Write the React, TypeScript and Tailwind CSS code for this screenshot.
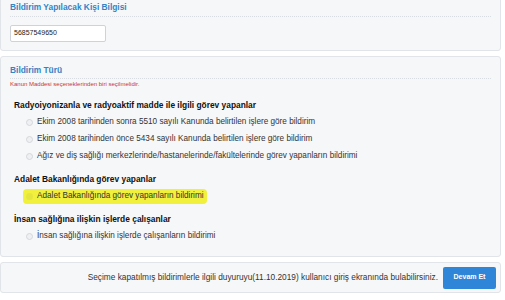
const sections = [
  {
    title: "Radyoiyonizanla ve radyoaktif madde ile ilgili görev yapanlar",
    options: [
      "Ekim 2008 tarihinden sonra 5510 sayılı Kanunda belirtilen işlere göre bildirim",
      "Ekim 2008 tarihinden önce 5434 sayılı Kanunda belirtilen işlere göre bildirim",
      "Ağız ve diş sağlığı merkezlerinde/hastanelerinde/fakültelerinde görev yapanların bildirimi",
    ],
  },
  {
    title: "Adalet Bakanlığında görev yapanlar",
    options: ["Adalet Bakanlığında görev yapanların bildirimi"],
    marked: true,
  },
  {
    title: "İnsan sağlığına ilişkin işlerde çalışanlar",
    options: ["İnsan sağlığına ilişkin işlerde çalışanların bildirimi"],
  },
];

function Radio() {
  return <span className="inline-block h-[7px] w-[7px] shrink-0 rounded-full border border-[#d4d7db] bg-[#eef0f2]" />;
}

export default function App() {
  return (
    <div className="h-[300px] w-[505px] overflow-hidden bg-white font-['Liberation_Sans',Arial,sans-serif] text-[#222]">
      <div className="mt-[-6px] w-[501px] rounded-[3px] border border-[#e1e4e8] bg-[#f6f7f9] px-[9px] pb-[8px] pt-[6px]">
        <div className="text-[8.4px] font-bold leading-[13px] text-[#3583c4]">Bildirim Yapılacak Kişi Bilgisi</div>
        <div className="mt-[2px] border-b border-dotted border-[#d9dde2]" />
        <div className="mt-[8px] flex h-[17px] w-[96px] items-center rounded-[2px] border border-[#cfd3d8] bg-white px-[3px] text-[7px]">
          56857549650
        </div>
      </div>

      <div className="mt-[5px] w-[501px] rounded-[3px] border border-[#e1e4e8] bg-[#f6f7f9] px-[9px] pb-[11px] pt-[7px]">
        <div className="text-[8.4px] font-bold leading-[13px] text-[#3583c4]">Bildirim Türü</div>
        <div className="mt-[1px] border-b border-dotted border-[#d9dde2]" />
        <div className="mt-[1px] text-[6px] leading-[8px] text-[#c8363a]">Kanun Maddesi seçeneklerinden biri seçilmelidir.</div>

        <div className="mt-[10px] flex flex-col pl-[4px]">
          {sections.map((s, i) => (
            <div key={i} className={i === 0 ? "" : "mt-[7px]"}>
              <div className="text-[8.4px] font-bold leading-[14px] text-[#111]">{s.title}</div>
              <div className="mt-[2px] flex flex-col">
                {s.options.map((o) => (
                  <div key={o} className="flex h-[17px] items-center pl-[12px] text-[8.2px] text-[#333]">
                    {s.marked ? (
                      <span className="-ml-[3px] flex items-center gap-[4px] rounded-[4px] bg-[#f1f03c] px-[3px] py-[1px]">
                        <span className="inline-block h-[7px] w-[7px] rounded-full bg-[#e5e540]" />
                        {o}
                      </span>
                    ) : (
                      <span className="flex items-center gap-[4px]">
                        <Radio />
                        {o}
                      </span>
                    )}
                  </div>
                ))}
              </div>
            </div>
          ))}
        </div>
      </div>

      <div className="mt-[5px] flex h-[31px] w-[501px] items-center justify-end gap-[5px] rounded-[3px] border border-[#e1e4e8] bg-[#f6f7f9] pr-[4px]">
        <span className="text-[8.3px] text-[#333]">
          Seçime kapatılmış bildirimlerle ilgili duyuruyu(11.10.2019) kullanıcı giriş ekranında bulabilirsiniz.
        </span>
        <button className="h-[22px] w-[53px] rounded-[2px] bg-[#2f86d9] text-[7px] font-bold text-white">Devam Et</button>
      </div>
    </div>
  );
}
